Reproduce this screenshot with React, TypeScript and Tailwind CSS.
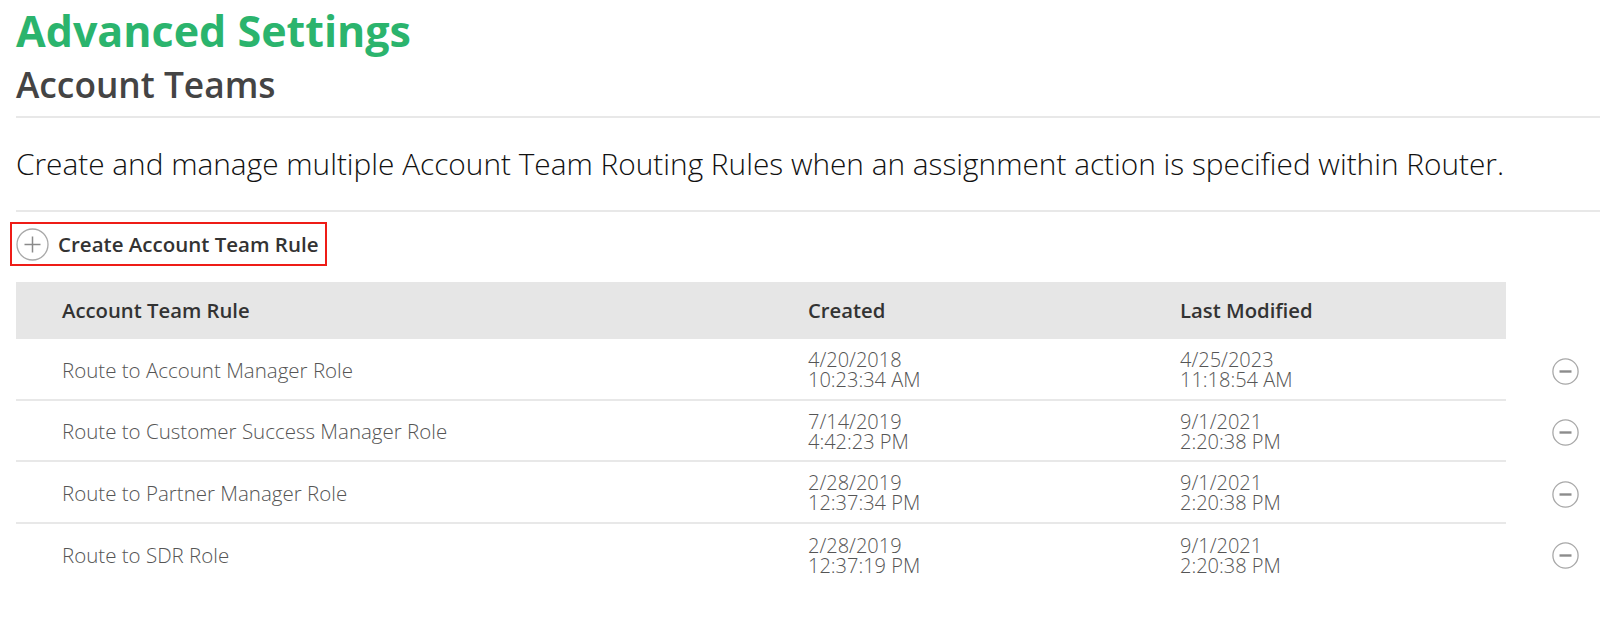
import { Fragment } from 'react';

const rules = [
  { name: 'Route to Account Manager Role', created: ['4/20/2018', '10:23:34 AM'], modified: ['4/25/2023', '11:18:54 AM'] },
  { name: 'Route to Customer Success Manager Role', created: ['7/14/2019', '4:42:23 PM'], modified: ['9/1/2021', '2:20:38 PM'] },
  { name: 'Route to Partner Manager Role', created: ['2/28/2019', '12:37:34 PM'], modified: ['9/1/2021', '2:20:38 PM'] },
  { name: 'Route to SDR Role', created: ['2/28/2019', '12:37:19 PM'], modified: ['9/1/2021', '2:20:38 PM'] },
];

function PlusCircle() {
  return (
    <svg width="33" height="33" viewBox="0 0 33 33" fill="none">
      <circle cx="16.5" cy="16.5" r="15.5" stroke="#a8a8a8" strokeWidth="1.3" />
      <path d="M16.5 8.5v16M8.5 16.5h16" stroke="#8a8a8a" strokeWidth="1.5" />
    </svg>
  );
}

function MinusCircle() {
  return (
    <svg width="27" height="27" viewBox="0 0 27 27" fill="none">
      <circle cx="13.5" cy="13.5" r="12.6" stroke="#a8a8a8" strokeWidth="1.3" />
      <path d="M7.5 13.5h12" stroke="#8c8c8c" strokeWidth="2.4" />
    </svg>
  );
}

function DateCell({ lines }: { lines: string[] }) {
  return (
    <div className="pl-[46px] text-[20px] leading-[20px] font-light text-[#555]">
      {lines.map((l) => (
        <div key={l}>{l}</div>
      ))}
    </div>
  );
}

export default function App() {
  return (
    <div className="min-h-[621px] bg-white pl-4 font-['Open_Sans',_'Noto_Sans',sans-serif]">
      <h1 className="pt-[7px] text-[43px] leading-[48px] font-bold text-[#2bb46d]">Advanced Settings</h1>
      <h2 className="mt-[7px] text-[35.3px] leading-[44px] font-semibold text-[#444]">Account Teams</h2>
      <div className="mt-[10px] h-[2px] bg-[#e8e8e8]" />

      <p className="mt-[28px] text-[29.8px] leading-[36px] font-light text-[#111]">
        Create and manage multiple Account Team Routing Rules when an assignment action is specified within Router.
      </p>
      <div className="mt-[28px] h-[2px] bg-[#e8e8e8]" />

      <div className="mt-[10px] -ml-[6px] flex h-[44px] w-[317px] items-center gap-[9px] border-2 border-[#ee1c17] pl-[4px]">
        <PlusCircle />
        <span className="text-[20.5px] font-semibold text-[#333]">Create Account Team Rule</span>
      </div>

      <div className="mt-[16px] grid w-[1490px] grid-cols-[746px_372px_1fr] items-center h-[57px] bg-[#e6e6e6] text-[20.3px] font-semibold text-[#333]">
        <div className="pl-[46px]">Account Team Rule</div>
        <div className="pl-[46px]">Created</div>
        <div className="pl-[46px]">Last Modified</div>
      </div>

      {rules.map((r, i) => (
        <Fragment key={r.name}>
          <div className="flex items-center">
            <div
              className={
                'grid w-[1490px] grid-cols-[746px_372px_1fr] items-center h-[61.5px] pt-[3px] ' +
                (i < rules.length - 1 ? 'border-b-2 border-[#e8e8e8]' : '')
              }
            >
              <div className="pl-[46px] text-[20.5px] font-light text-[#555]">{r.name}</div>
              <DateCell lines={r.created} />
              <DateCell lines={r.modified} />
            </div>
            <div className="pl-[46px] pt-[3px] flex">
              <MinusCircle />
            </div>
          </div>
        </Fragment>
      ))}
    </div>
  );
}
